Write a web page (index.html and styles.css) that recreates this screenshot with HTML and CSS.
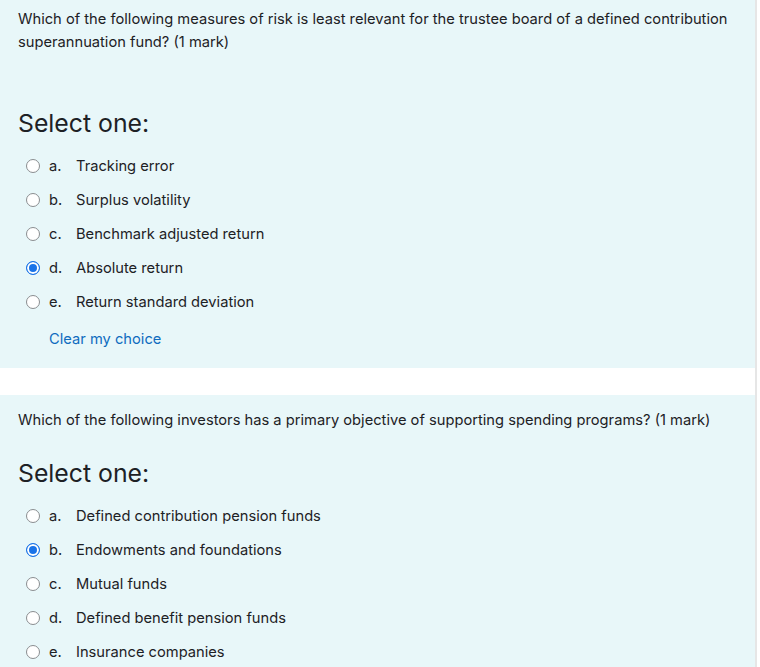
FILE: index.html
```html
<!DOCTYPE html>
<html lang="en">
<head>
<meta charset="utf-8">
<title>Quiz</title>
<link rel="stylesheet" href="styles.css">
</head>
<body>
<div class="page">
  <section class="que first">
    <p class="qtext">Which of the following measures of risk is least relevant for the trustee board of a defined contribution superannuation fund? (1 mark)</p>
    <h3 class="prompt">Select one:</h3>
    <div class="answer">
      <label class="opt"><span class="radio"></span><span class="letter">a.</span><span class="text">Tracking error</span></label>
      <label class="opt"><span class="radio"></span><span class="letter">b.</span><span class="text">Surplus volatility</span></label>
      <label class="opt"><span class="radio"></span><span class="letter">c.</span><span class="text">Benchmark adjusted return</span></label>
      <label class="opt"><span class="radio checked"></span><span class="letter">d.</span><span class="text">Absolute return</span></label>
      <label class="opt"><span class="radio"></span><span class="letter">e.</span><span class="text">Return standard deviation</span></label>
    </div>
    <a class="clear" href="#">Clear my choice</a>
  </section>
  <div class="gap"></div>
  <section class="que second">
    <p class="qtext">Which of the following investors has a primary objective of supporting spending programs? (1 mark)</p>
    <h3 class="prompt">Select one:</h3>
    <div class="answer">
      <label class="opt"><span class="radio"></span><span class="letter">a.</span><span class="text">Defined contribution pension funds</span></label>
      <label class="opt"><span class="radio checked"></span><span class="letter">b.</span><span class="text">Endowments and foundations</span></label>
      <label class="opt"><span class="radio"></span><span class="letter">c.</span><span class="text">Mutual funds</span></label>
      <label class="opt"><span class="radio"></span><span class="letter">d.</span><span class="text">Defined benefit pension funds</span></label>
      <label class="opt"><span class="radio"></span><span class="letter">e.</span><span class="text">Insurance companies</span></label>
    </div>
  </section>
</div>
</body>
</html>
```
FILE: styles.css
```css
html, body {
  margin: 0;
  padding: 0;
  background: #ffffff;
}
body {
  font-family: Inter, "Liberation Sans", sans-serif;
  color: #1d2125;
  font-size: 14.7px;
  line-height: 23px;
}
.page {
  width: 755px;
  border-right: 2px solid #e6e6e6;
  min-height: 667px;
}
.que {
  background: #e8f7f9;
  padding: 0 18px;
}
.que.first {
  padding-top: 8px;
  padding-bottom: 17px;
}
.que.second {
  padding-top: 14px;
  padding-bottom: 20px;
}
.qtext {
  margin: 0;
}
.prompt {
  margin: 0;
  font-weight: 400;
  font-size: 24.8px;
  line-height: 31px;
}
.first .prompt { margin-top: 54px; }
.second .prompt { margin-top: 26px; }
.answer {
  margin-top: 10px;
  display: flex;
  flex-direction: column;
}
.opt {
  display: flex;
  align-items: center;
  height: 34px;
  padding-left: 8px;
}
.radio {
  width: 12px;
  height: 12px;
  border: 1px solid #8a8d90;
  border-radius: 50%;
  background: #ffffff;
  box-sizing: content-box;
  flex: none;
}
.radio.checked {
  background: #1a73e8;
  box-shadow: inset 0 0 0 2px #ffffff;
  border: 1px solid #1a73e8;
}
.letter {
  margin-left: 9px;
  width: 27px;
}
.clear {
  display: block;
  margin-top: 9px;
  margin-left: 31px;
  color: #0f6cbf;
  text-decoration: none;
}
.gap {
  height: 27px;
}
```
